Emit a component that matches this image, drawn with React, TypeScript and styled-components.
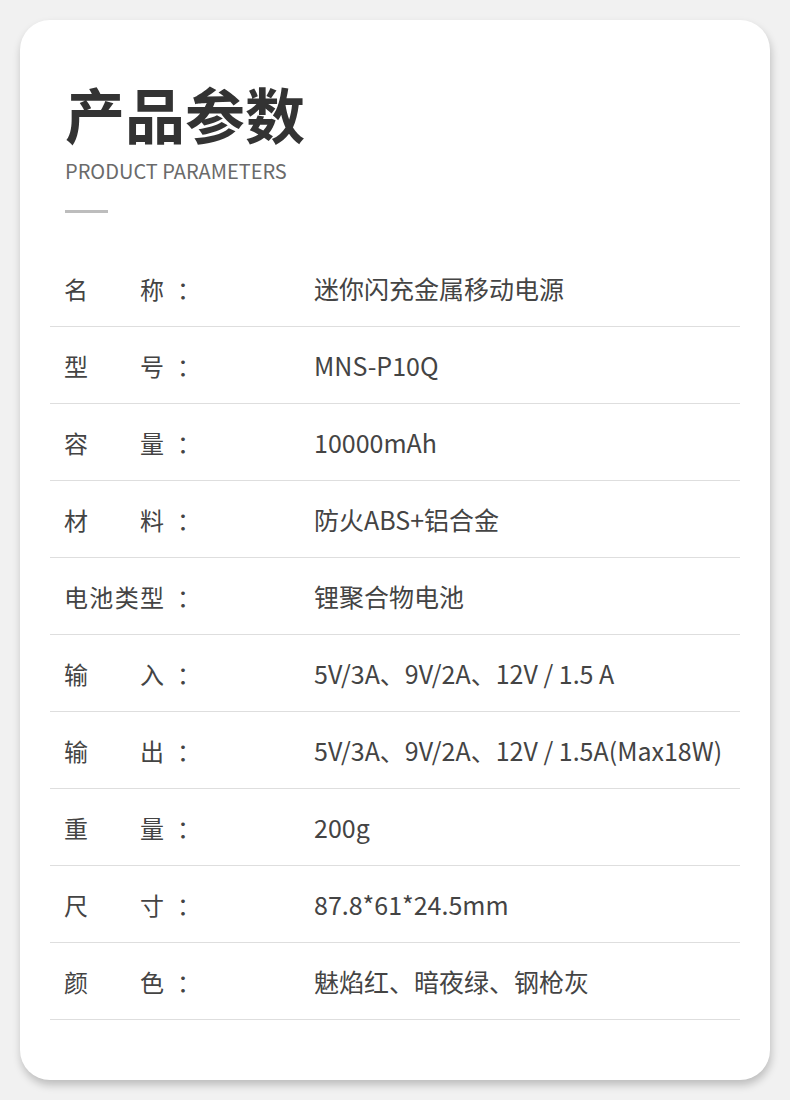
import React, { FC } from 'react'
import styled, { createGlobalStyle } from 'styled-components'

const GlobalStyle = createGlobalStyle`
  html, body {
    margin: 0;
    padding: 0;
    background: #f1f1f1;
  }
  body {
    font-family: "Noto Sans CJK SC", "Noto Sans", sans-serif;
  }
`

const Page = styled.div`
  width: 790px;
  height: 1100px;
  padding: 20px;
  box-sizing: border-box;
  background: #f1f1f1;
`

const Card = styled.div`
  height: 1060px;
  box-sizing: border-box;
  background: #fff;
  border-radius: 30px;
  box-shadow: 1px 5px 9px rgba(0, 0, 0, 0.22);
  padding: 63px 30px 0 30px;
`

const Header = styled.div`
  padding-left: 15px;
  display: flex;
  flex-direction: column;
  align-items: flex-start;
`

const Title = styled.h1`
  margin: 0;
  font-size: 60px;
  line-height: 60px;
  font-weight: 700;
  color: #333;
`

const Subtitle = styled.div`
  margin-top: 16px;
  font-size: 20px;
  line-height: 24px;
  font-weight: 400;
  color: #6a6a6a;
`

const Bar = styled.div`
  margin-top: 27px;
  width: 43px;
  height: 3px;
  background: #bdbdbd;
`

const Table = styled.div`
  margin-top: 37px;
  display: flex;
  flex-direction: column;
`

const Row = styled.div`
  height: 77px;
  display: flex;
  align-items: center;
  border-bottom: 1px solid #dedede;
  box-sizing: border-box;
  padding-left: 14px;
  color: #444;
`

const Label = styled.div`
  width: 100px;
  display: flex;
  justify-content: space-between;
  font-size: 24px;
`

const Colon = styled.span`
  width: 137px;
  padding-left: 13px;
  font-size: 24px;
`

const Value = styled.div`
  font-size: 25px;
  white-space: nowrap;
`

type Spec = { label: string; value: string }

const specs: Spec[] = [
  { label: '名称', value: '迷你闪充金属移动电源' },
  { label: '型号', value: 'MNS-P10Q' },
  { label: '容量', value: '10000mAh' },
  { label: '材料', value: '防火ABS+铝合金' },
  { label: '电池类型', value: '锂聚合物电池' },
  { label: '输入', value: '5V/3A、9V/2A、12V / 1.5 A' },
  { label: '输出', value: '5V/3A、9V/2A、12V / 1.5A(Max18W)' },
  { label: '重量', value: '200g' },
  { label: '尺寸', value: '87.8*61*24.5mm' },
  { label: '颜色', value: '魅焰红、暗夜绿、钢枪灰' },
]

const SpecRow: FC<Spec> = ({ label, value }) => (
  <Row>
    <Label>
      {label.split('').map((ch, i) => <span key={i}>{ch}</span>)}
    </Label>
    <Colon>：</Colon>
    <Value>{value}</Value>
  </Row>
)

export default function App() {
  return (
    <Page>
      <GlobalStyle />
      <Card>
        <Header>
          <Title>产品参数</Title>
          <Subtitle>PRODUCT PARAMETERS</Subtitle>
          <Bar />
        </Header>
        <Table>
          {specs.map((s) => <SpecRow key={s.label} {...s} />)}
        </Table>
      </Card>
    </Page>
  )
}
